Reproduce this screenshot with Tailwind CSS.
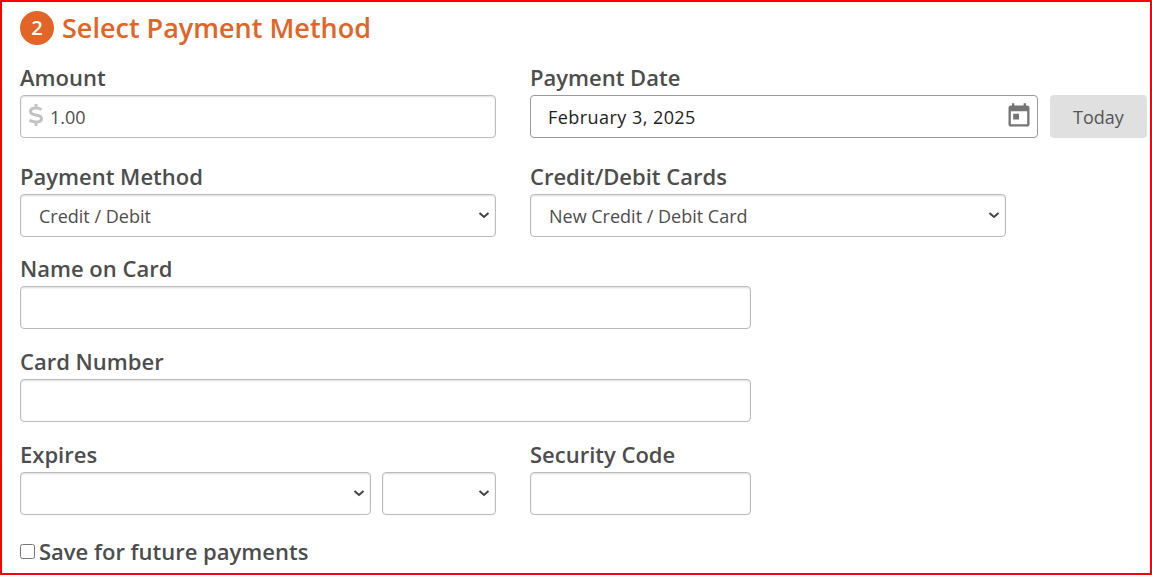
<!DOCTYPE html>
<html lang="en">
<head>
  <meta charset="UTF-8" />
  <meta name="viewport" content="width=device-width, initial-scale=1" />
  <title>Select Payment Method</title>
  <script src="https://cdn.jsdelivr.net/npm/@tailwindcss/browser@4"></script>
</head>
<body class="bg-white font-['Open_Sans',sans-serif] text-[#4d4d4d]">

<form class="min-h-screen border-2 border-[#ff0000] pl-[18px] pr-[3px] pt-2 pb-1">
  <h2 class="flex items-center gap-2 mb-[15px] text-[27px] leading-9 font-semibold text-[#e26426]">
    <span class="flex items-center justify-center size-[34px] rounded-full bg-[#e26426] text-white text-xl">2</span>
    Select Payment Method
  </h2>

  <div class="grid grid-cols-[476px_1fr] gap-x-[34px] mb-[22px]">
    <div>
      <label for="amount" class="block mb-0.5 text-[22px] leading-8 font-semibold">Amount</label>
      <div class="relative">
        <svg class="absolute left-[8px] top-[8px] w-[16px] h-[24px]" viewBox="0 0 16 24" fill="none" stroke="#c2c2c2" stroke-width="3" stroke-linecap="butt" stroke-linejoin="round"><path d="M8 1v4M8 19v4M13.500 6.500C12 5.600 10 5 8 5 5 5 2.500 6 2.500 8.500S5 11.500 8 12s5.500 1.200 5.500 3.500S11 19 8 19c-2.200 0-4.500-.6-6.500-1.600"/></svg>
        <input type="text" id="amount" value="1.00" class="block w-full h-[43px] pl-[29px] pr-3 border border-[#bbb] rounded-[4px] shadow-[inset_0_1px_2px_#0002] text-lg" />
      </div>
    </div>
    <div>
      <label for="date" class="block mb-0.5 text-[22px] leading-8 font-semibold">Payment Date</label>
      <div class="flex gap-3">
        <div class="relative flex-1">
          <input type="text" id="date" value="February 3, 2025" class="block w-full h-[43px] pl-[17px] pr-10 border border-[#999] rounded-[4px] text-lg tracking-wide text-[#222]" />
          <svg class="absolute right-[5px] top-[7px] size-[28px]" viewBox="0 0 24 24" fill="#757575"><path d="M19 3h-1V1h-2v2H8V1H6v2H5c-1.100 0-2 .9-2 2v14c0 1.100.9 2 2 2h14c1.100 0 2-.9 2-2V5c0-1.100-.9-2-2-2zm0 16H5V8h14v11zM7 10h5v5H7z"/></svg>
        </div>
        <button type="button" class="w-[97px] h-[43px] rounded-[4px] bg-[#e0e0e0] text-lg text-[#555]">Today</button>
      </div>
    </div>
  </div>

  <div class="grid grid-cols-[476px_476px] gap-x-[34px] mb-[15px]">
    <div>
      <label for="method" class="block mb-0.5 text-[22px] leading-8 font-semibold">Payment Method</label>
      <div class="relative">
        <select id="method" class="block appearance-none w-full h-[43px] pl-[18px] pr-8 border border-[#bbb] rounded-[4px] shadow-[inset_0_1px_2px_#0002] text-lg"><option>Credit / Debit</option></select>
        <svg class="absolute right-[6px] top-[18px] w-3 h-2 pointer-events-none" viewBox="0 0 12 8" fill="none" stroke="#444" stroke-width="2"><path d="M1.500 1L6 5l4.500-4"/></svg>
      </div>
    </div>
    <div>
      <label for="card" class="block mb-0.5 text-[22px] leading-8 font-semibold">Credit/Debit Cards</label>
      <div class="relative">
        <select id="card" class="block appearance-none w-full h-[43px] pl-[18px] pr-8 border border-[#bbb] rounded-[4px] shadow-[inset_0_1px_2px_#0002] text-lg"><option>New Credit / Debit Card</option></select>
        <svg class="absolute right-[6px] top-[18px] w-3 h-2 pointer-events-none" viewBox="0 0 12 8" fill="none" stroke="#444" stroke-width="2"><path d="M1.500 1L6 5l4.500-4"/></svg>
      </div>
    </div>
  </div>

  <div class="max-w-[731px] mb-4">
    <label for="name" class="block mb-0.5 text-[22px] leading-8 font-semibold">Name on Card</label>
    <input type="text" id="name" class="block w-full h-[43px] px-3 border border-[#bbb] rounded-[4px] shadow-[inset_0_1px_2px_#0002] text-lg" />
  </div>

  <div class="max-w-[731px] mb-4">
    <label for="number" class="block mb-0.5 text-[22px] leading-8 font-semibold">Card Number</label>
    <input type="text" id="number" class="block w-full h-[43px] px-3 border border-[#bbb] rounded-[4px] shadow-[inset_0_1px_2px_#0002] text-lg" />
  </div>

  <div class="grid grid-cols-[476px_221px] gap-x-[34px] mb-5">
    <div>
      <label for="month" class="block mb-0.5 text-[22px] leading-8 font-semibold">Expires</label>
      <div class="flex gap-[11px]">
        <div class="relative flex-1">
          <select id="month" class="block appearance-none w-full h-[43px] pl-[18px] pr-8 border border-[#bbb] rounded-[4px] shadow-[inset_0_1px_2px_#0002] text-lg"></select>
          <svg class="absolute right-[6px] top-[18px] w-3 h-2 pointer-events-none" viewBox="0 0 12 8" fill="none" stroke="#444" stroke-width="2"><path d="M1.500 1L6 5l4.500-4"/></svg>
        </div>
        <div class="relative w-[114px]">
          <select id="year" aria-label="Expiration year" class="block appearance-none w-full h-[43px] pl-[18px] pr-8 border border-[#bbb] rounded-[4px] shadow-[inset_0_1px_2px_#0002] text-lg"></select>
          <svg class="absolute right-[6px] top-[18px] w-3 h-2 pointer-events-none" viewBox="0 0 12 8" fill="none" stroke="#444" stroke-width="2"><path d="M1.500 1L6 5l4.500-4"/></svg>
        </div>
      </div>
    </div>
    <div>
      <label for="code" class="block mb-0.5 text-[22px] leading-8 font-semibold">Security Code</label>
      <input type="text" id="code" class="block w-full h-[43px] px-3 border border-[#bbb] rounded-[4px] shadow-[inset_0_1px_2px_#0002] text-lg" />
    </div>
  </div>

  <div class="flex items-center gap-1">
    <input type="checkbox" id="save" class="size-[15px]" />
    <label for="save" class="text-[22px] leading-8 font-semibold">Save for future payments</label>
  </div>
</form>

</body>
</html>
